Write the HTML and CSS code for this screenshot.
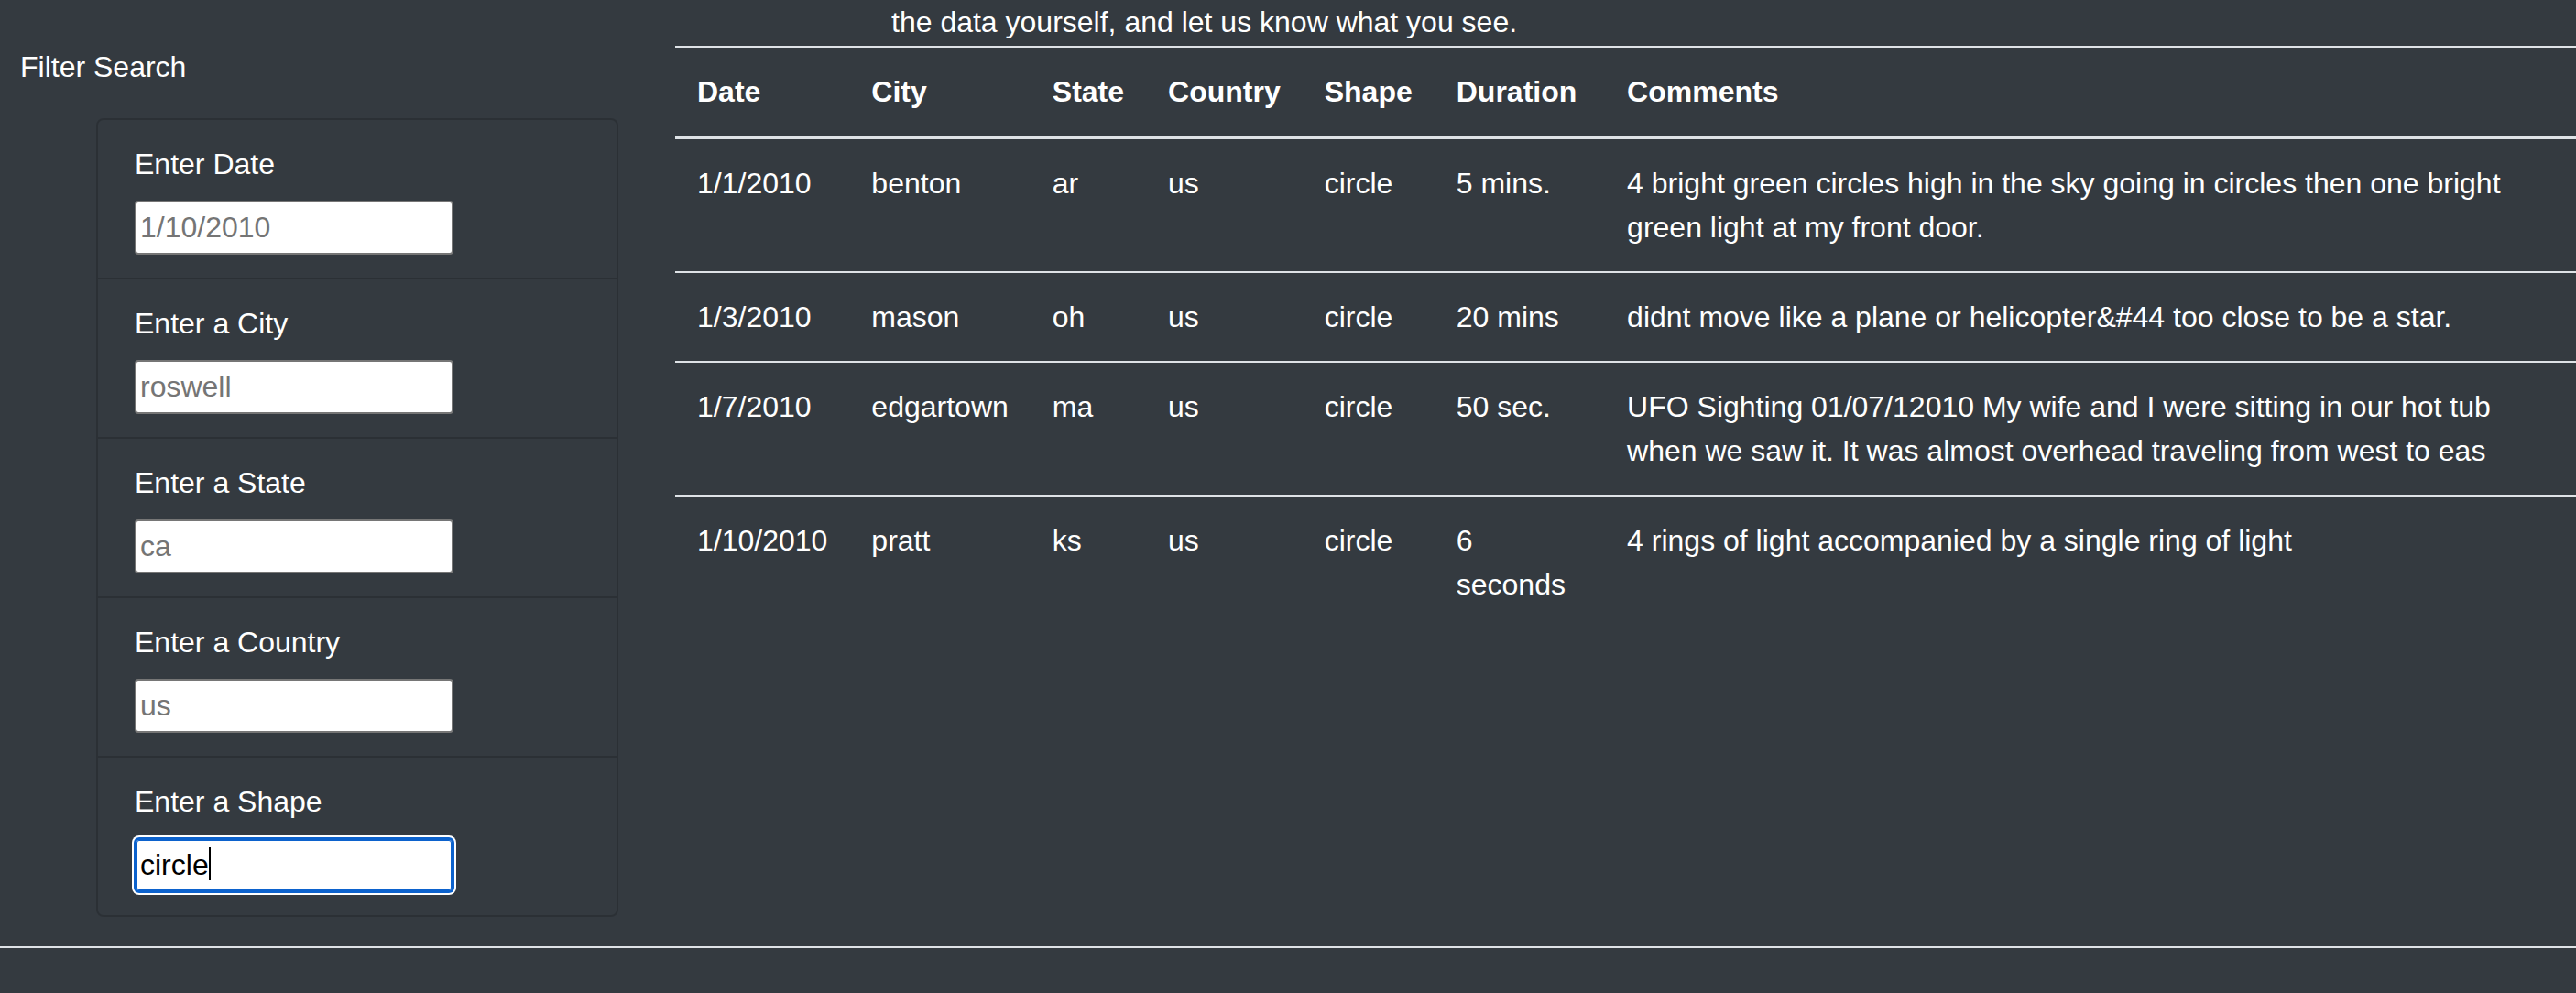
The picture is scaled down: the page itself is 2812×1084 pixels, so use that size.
FILE: index.html
```html
<!DOCTYPE html>
<html lang="en">
<head>
<meta charset="utf-8">
<title>UFO Sightings</title>
<link rel="stylesheet" href="styles.css">
</head>
<body>
<div class="page">
  <aside class="sidebar">
    <div class="filter-title">Filter Search</div>
    <ul class="filters">
      <li class="filter-item">
        <label class="filter-label" for="datetime">Enter Date</label>
        <input class="filter-input" id="datetime" type="text" placeholder="1/10/2010">
      </li>
      <li class="filter-item">
        <label class="filter-label" for="city">Enter a City</label>
        <input class="filter-input" id="city" type="text" placeholder="roswell">
      </li>
      <li class="filter-item">
        <label class="filter-label" for="state">Enter a State</label>
        <input class="filter-input" id="state" type="text" placeholder="ca">
      </li>
      <li class="filter-item">
        <label class="filter-label" for="country">Enter a Country</label>
        <input class="filter-input" id="country" type="text" placeholder="us">
      </li>
      <li class="filter-item">
        <label class="filter-label" for="shape">Enter a Shape</label>
        <span class="input-wrap">
          <input class="filter-input is-focused" id="shape" type="text" value="circle">
          <span class="caret"></span>
        </span>
      </li>
    </ul>
  </aside>
  <main class="content">
    <p class="intro">the data yourself, and let us know what you see.</p>
    <table class="sightings">
      <thead>
        <tr>
          <th>Date</th>
          <th>City</th>
          <th>State</th>
          <th>Country</th>
          <th>Shape</th>
          <th>Duration</th>
          <th>Comments</th>
        </tr>
      </thead>
      <tbody>
        <tr>
          <td>1/1/2010</td>
          <td>benton</td>
          <td>ar</td>
          <td>us</td>
          <td>circle</td>
          <td>5 mins.</td>
          <td>4 bright green circles high in the sky going in circles then one bright green light at my front door.</td>
        </tr>
        <tr>
          <td>1/3/2010</td>
          <td>mason</td>
          <td>oh</td>
          <td>us</td>
          <td>circle</td>
          <td>20 mins</td>
          <td>didnt move like a plane or helicopter&amp;#44 too close to be a star.</td>
        </tr>
        <tr>
          <td>1/7/2010</td>
          <td>edgartown</td>
          <td>ma</td>
          <td>us</td>
          <td>circle</td>
          <td>50 sec.</td>
          <td>UFO Sighting 01/07/12010 My wife and I were sitting in our hot tub when we saw it. It was almost overhead traveling from west to eas</td>
        </tr>
        <tr>
          <td>1/10/2010</td>
          <td>pratt</td>
          <td>ks</td>
          <td>us</td>
          <td>circle</td>
          <td>6 seconds</td>
          <td>4 rings of light accompanied by a single ring of light</td>
        </tr>
      </tbody>
    </table>
  </main>
</div>
<footer class="footer"></footer>
</body>
</html>
```

FILE: styles.css
```css
* {
  box-sizing: border-box;
}

html,
body {
  margin: 0;
  padding: 0;
}

body {
  background: #343a40;
  color: #ffffff;
  font-family: "Liberation Sans", Arial, Helvetica, sans-serif;
  font-size: 32px;
  line-height: 48px;
}

.page {
  display: grid;
  grid-template-columns: 737px 1fr;
}

.sidebar {
  padding-top: 49px;
}

.filter-title {
  padding-left: 22px;
  margin-bottom: 32px;
}

.filters {
  list-style: none;
  margin: 0 0 0 105px;
  padding: 0;
  width: 570px;
  border: 2px solid rgba(0, 0, 0, 0.16);
  border-radius: 8px;
}

.filter-item {
  display: flex;
  flex-direction: column;
  align-items: flex-start;
  padding: 24px 40px 25px;
}

.filter-item + .filter-item {
  border-top: 2px solid rgba(0, 0, 0, 0.16);
}

.filter-label {
  margin-bottom: 16px;
}

.filter-input {
  display: block;
  width: 348px;
  height: 59px;
  margin: 0;
  padding: 0 4px;
  border: 2px solid #767676;
  border-radius: 4px;
  background: #ffffff;
  color: #000000;
  font-family: "Liberation Sans", Arial, Helvetica, sans-serif;
  font-size: 32px;
  outline: none;
}

.filter-input::placeholder {
  color: #757575;
  opacity: 1;
}

.filter-input.is-focused {
  border-color: #0c62cd;
  border-radius: 5px;
  box-shadow: inset 0 0 0 1px #0c62cd, 0 0 0 1px #0c62cd, 0 0 0 3px #ffffff;
}

.input-wrap {
  position: relative;
  display: block;
}

.caret {
  position: absolute;
  left: 81px;
  top: 10px;
  width: 2px;
  height: 36px;
  background: #000000;
}

.content {
  min-width: 0;
}

.intro {
  margin: 0 0 2px;
  padding-left: 236px;
}

.sightings {
  width: 100%;
  border-collapse: separate;
  border-spacing: 0;
}

.sightings th,
.sightings td {
  padding: 24px;
  text-align: left;
  vertical-align: top;
  border-top: 2px solid #dee2e6;
}

.sightings thead th {
  vertical-align: bottom;
  border-bottom: 4px solid #dee2e6;
  font-weight: bold;
}

.sightings tbody tr:first-child td {
  border-top: 0;
}

.footer {
  margin-top: 32px;
  border-top: 2px solid #dee2e6;
  height: 46px;
}
```
